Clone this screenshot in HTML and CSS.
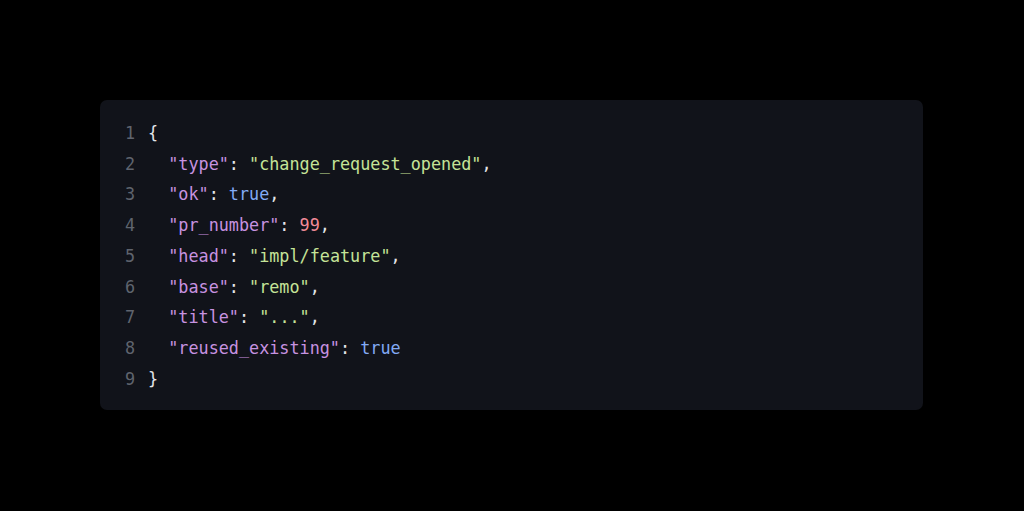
FILE: index.html
```html
<!DOCTYPE html>
<html lang="en">
<head>
<meta charset="utf-8">
<title>JSON</title>
<link rel="stylesheet" href="styles.css">
</head>
<body>
<main class="stage">
  <div class="code">
    <div class="line"><span class="ln">1</span><span class="src"><span class="p">{</span></span></div>
    <div class="line"><span class="ln">2</span><span class="src">  <span class="k">"type"</span><span class="p">: </span><span class="s">"change_request_opened"</span><span class="p">,</span></span></div>
    <div class="line"><span class="ln">3</span><span class="src">  <span class="k">"ok"</span><span class="p">: </span><span class="b">true</span><span class="p">,</span></span></div>
    <div class="line"><span class="ln">4</span><span class="src">  <span class="k">"pr_number"</span><span class="p">: </span><span class="n">99</span><span class="p">,</span></span></div>
    <div class="line"><span class="ln">5</span><span class="src">  <span class="k">"head"</span><span class="p">: </span><span class="s">"impl/feature"</span><span class="p">,</span></span></div>
    <div class="line"><span class="ln">6</span><span class="src">  <span class="k">"base"</span><span class="p">: </span><span class="s">"remo"</span><span class="p">,</span></span></div>
    <div class="line"><span class="ln">7</span><span class="src">  <span class="k">"title"</span><span class="p">: </span><span class="s">"..."</span><span class="p">,</span></span></div>
    <div class="line"><span class="ln">8</span><span class="src">  <span class="k">"reused_existing"</span><span class="p">: </span><span class="b">true</span></span></div>
    <div class="line"><span class="ln">9</span><span class="src"><span class="p">}</span></span></div>
  </div>
</main>
</body>
</html>
```
FILE: styles.css
```css
html, body {
  margin: 0;
  padding: 0;
  background: #000000;
}
.stage {
  width: 1024px;
  height: 511px;
  padding: 100px 101px 0 100px;
  box-sizing: border-box;
}
.code {
  background: #11131a;
  border-radius: 7px;
  height: 310px;
  box-sizing: border-box;
  padding: 18px 0 0 25px;
  font-family: "DejaVu Sans Mono", "Liberation Mono", monospace;
  font-size: 16.8px;
  line-height: 30.7px;
  color: #e4e6ea;
}
.line {
  display: flex;
  white-space: pre;
}
.ln {
  width: 10px;
  text-align: right;
  color: #5f646e;
  margin-right: 13px;
}
.k { color: #c792e0; }
.s { color: #c5e398; }
.b { color: #82aaf5; }
.n { color: #f28b98; }
.p { color: #e4e6ea; }
```
